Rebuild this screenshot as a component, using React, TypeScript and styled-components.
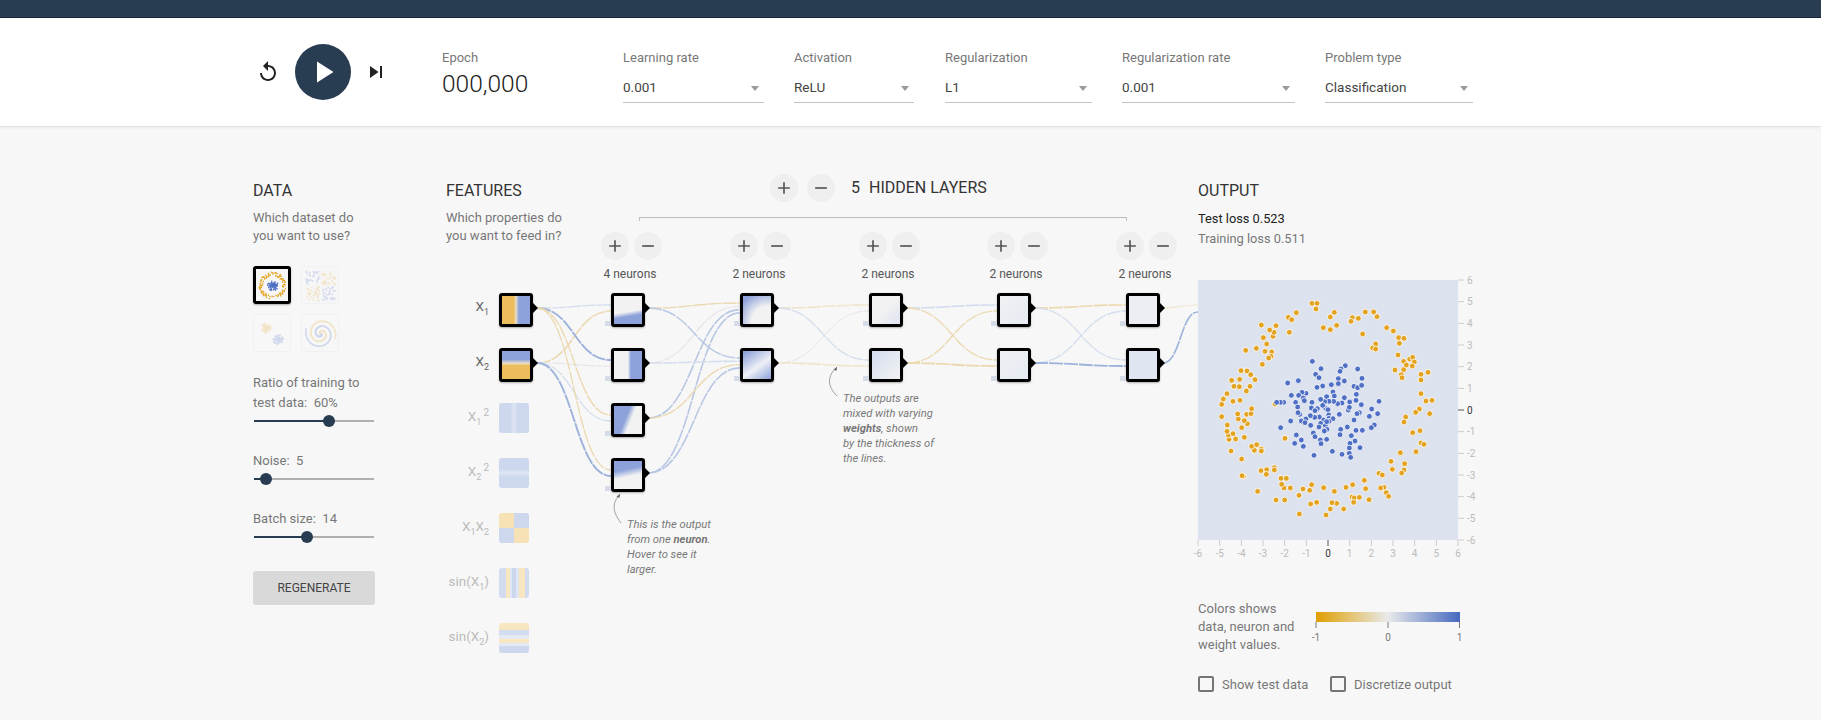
import React from 'react';
import styled, {createGlobalStyle} from 'styled-components';

const NAVY = '#283c52';
const BLUE_DOT = '#4e6fc4';
const ORANGE_DOT = '#e3a21f';
const NODE_BLUE = '#8da2da';
const NODE_ORANGE = '#ecbd5c';
const NODE_BLANK = '#f2f2f2';

const GlobalStyle = createGlobalStyle`
  html, body {
    margin: 0;
    height: 720px;
    overflow: hidden;
    background: #f7f7f7;
    font-family: Roboto, "Liberation Sans", sans-serif;
    color: #777;
  }
`;

const TopBar = styled.div`
  height: 17px;
  background: ${NAVY};
  border-bottom: 1px solid #1c2a3a;
  box-shadow: 0 1px 3px rgba(0, 0, 0, 0.25);
`;

const Header = styled.header`
  height: 109px;
  background: #fff;
  border-bottom: 1px solid #e4e4e4;
  box-shadow: 0 1px 3px rgba(0, 0, 0, 0.06);
  display: flex;
  align-items: flex-start;
  padding-left: 256px;
  box-sizing: border-box;
`;

const Playback = styled.div`
  display: flex;
  align-items: center;
  gap: 17px;
  margin-top: 26px;
  width: 186px;
`;

const PlainIcon = styled.svg`
  width: 24px;
  height: 24px;
  fill: #222;
  flex: none;
`;

const PlayButton = styled.div`
  width: 56px;
  height: 56px;
  border-radius: 50%;
  background: ${NAVY};
  display: flex;
  align-items: center;
  justify-content: center;
  flex: none;
  margin-left: -2px;
  margin-right: -4px;
  svg {
    width: 36px;
    height: 36px;
    fill: #fff;
  }
`;

const Field = styled.div<{$width: number; $gap: number}>`
  width: ${p => p.$width}px;
  margin-right: ${p => p.$gap}px;
  flex: none;
`;

const FieldLabel = styled.div`
  font-size: 13px;
  line-height: 16px;
  margin-top: 32px;
  color: #777;
`;

const EpochValue = styled.div`
  font-size: 24.5px;
  line-height: 30px;
  margin-top: 3px;
  font-weight: 300;
  color: #222;
`;

const SelectBox = styled.div`
  position: relative;
  border-bottom: 1px solid #c4c4c4;
  font-size: 13.5px;
  line-height: 43px;
  color: #444;
  height: 36px;
  &::after {
    content: '';
    position: absolute;
    right: 5px;
    top: 20px;
    border-left: 4.5px solid transparent;
    border-right: 4.5px solid transparent;
    border-top: 5px solid #9a9a9a;
  }
`;

const Main = styled.main`
  display: grid;
  grid-template-columns: 193px 752px 300px;
  padding: 53px 0 0 253px;
`;

const Title = styled.h4`
  margin: 0;
  padding-top: 1px;
  font-size: 16px;
  line-height: 20px;
  font-weight: 400;
  color: #333;
`;

const Blurb = styled.p`
  margin: 8px 0 0;
  font-size: 13px;
  line-height: 18px;
  color: #777;
`;

const DataColumn = styled.section`
  width: 125px;
`;

const ThumbGrid = styled.div`
  display: grid;
  grid-template-columns: 38px 38px;
  grid-auto-rows: 38px;
  gap: 10px;
  margin-top: 21px;
`;

const Thumb = styled.div<{$active?: boolean}>`
  box-sizing: border-box;
  border-radius: 3px;
  overflow: hidden;
  border: ${p => (p.$active ? '3px solid #000' : '1px solid #f1f1f1')};
  box-shadow: ${p => (p.$active ? '0 1px 2px rgba(0,0,0,.3)' : 'none')};
  svg {
    display: block;
    width: 100%;
    height: 100%;
    opacity: ${p => (p.$active ? 1 : 0.22)};
  }
`;

const SliderLabel = styled.div`
  font-size: 13px;
  line-height: 20px;
  color: #777;
  white-space: pre;
`;

const SliderBlock = styled.div<{$top: number}>`
  margin-top: ${p => p.$top}px;
`;

const SliderTrack = styled.div`
  position: relative;
  height: 2px;
  width: 120px;
  margin: 7px 0 0 1px;
  background: #b0b0b0;
`;

const SliderFill = styled.div`
  height: 100%;
  background: ${NAVY};
`;

const SliderThumb = styled.div`
  position: absolute;
  top: -5px;
  width: 12px;
  height: 12px;
  margin-left: -6px;
  border-radius: 50%;
  background: ${NAVY};
`;

const RegenerateButton = styled.button`
  display: block;
  width: 122px;
  height: 34px;
  margin-top: 33px;
  border: 0;
  border-radius: 3px;
  background: #d9d9d9;
  color: #444;
  font: 400 12px Roboto, sans-serif;
`;

const Middle = styled.section`
  position: relative;
  height: 500px;
`;

const TopRow = styled.div`
  display: flex;
  align-items: flex-start;
`;

const Intro = styled.div`
  width: 324px;
  flex: none;
`;

const LayersControl = styled.div`
  display: flex;
  align-items: center;
  gap: 9px;
  margin-top: -6px;
`;

const LayersLabel = styled.div`
  display: flex;
  gap: 9px;
  margin: -2px 0 0 7px;
  font-size: 16px;
  color: #333;
`;

const RoundButton = styled.div`
  width: 28px;
  height: 28px;
  border-radius: 50%;
  background: #efefef;
  display: flex;
  align-items: center;
  justify-content: center;
  flex: none;
  svg {
    width: 20px;
    height: 20px;
    fill: #555;
  }
`;

const Bracket = styled.div`
  position: absolute;
  left: 193px;
  top: 37px;
  width: 488px;
  height: 4px;
  border: 1px solid #bdbdbd;
  border-bottom: 0;
  box-sizing: border-box;
`;

const LinkLayer = styled.svg`
  position: absolute;
  left: 0;
  top: 0;
  overflow: visible;
`;

const LayerHead = styled.div`
  position: absolute;
  top: 52px;
  width: 70px;
  display: flex;
  flex-wrap: wrap;
  justify-content: center;
  gap: 5px;
`;

const NeuronCount = styled.div`
  width: 100%;
  text-align: center;
  font-size: 12px;
  line-height: 14px;
  margin-top: 2px;
  color: #555;
  padding-right: 2px;
  white-space: nowrap;
`;

const Neuron = styled.div`
  position: absolute;
  width: 34px;
  height: 34px;
  box-sizing: border-box;
  border: 3px solid #000;
  border-radius: 3px;
  box-shadow: 0 1px 2px rgba(0, 0, 0, 0.3);
  &::after {
    content: '';
    position: absolute;
    left: 31px;
    top: 7px;
    border-top: 5px solid transparent;
    border-bottom: 5px solid transparent;
    border-left: 5px solid #000;
  }
`;

const BiasSquare = styled.div`
  position: absolute;
  width: 6px;
  height: 5px;
  background: #d5dce8;
`;

const FeatureRow = styled.div`
  position: absolute;
  left: 0;
  width: 87px;
  display: flex;
  align-items: center;
  justify-content: flex-end;
`;

const FeatureName = styled.div<{$on?: boolean}>`
  position: absolute;
  right: 44px;
  top: 5px;
  font-size: 13.5px;
  color: ${p => (p.$on ? '#666' : '#bbb')};
  white-space: nowrap;
  sub, sup {
    font-size: 9px;
    line-height: 0;
  }
  sup {
    font-size: 10px;
    margin-left: 2px;
  }
`;

const ActiveFeature = styled.div`
  width: 34px;
  height: 34px;
  box-sizing: border-box;
  position: relative;
  border: 3px solid #000;
  border-radius: 3px;
  box-shadow: 0 1px 2px rgba(0, 0, 0, 0.3);
  &::after {
    content: '';
    position: absolute;
    left: 31px;
    top: 7px;
    border-top: 5px solid transparent;
    border-bottom: 5px solid transparent;
    border-left: 5px solid #000;
  }
`;

const IdleFeature = styled.div`
  width: 30px;
  height: 30px;
  border-radius: 3px;
  margin-right: 4px;
`;

const Note = styled.div`
  position: absolute;
  font-size: 11.2px;
  line-height: 15px;
  font-style: italic;
  color: #777;
  b {
    font-weight: 700;
  }
`;

const OutputColumn = styled.section``;

const LossLine = styled.div<{$dark?: boolean}>`
  font-size: 12.8px;
  line-height: 20px;
  color: ${p => (p.$dark ? '#222' : '#777')};
`;

const Losses = styled.div`
  margin-top: 8px;
`;

const ChartFrame = styled.svg`
  display: block;
  margin-top: 31px;
  width: 290px;
  height: 285px;
  overflow: visible;
`;

const LegendRow = styled.div`
  display: flex;
  gap: 13px;
  margin-top: 35px;
`;

const LegendText = styled.div`
  width: 105px;
  font-size: 13px;
  line-height: 18px;
  color: #777;
`;

const LegendScale = styled.svg`
  width: 150px;
  height: 41px;
  margin-top: 12px;
  overflow: visible;
`;

const CheckRow = styled.div`
  display: flex;
  margin-top: 22px;
`;

const Check = styled.label<{$width: number}>`
  width: ${p => p.$width}px;
  display: flex;
  align-items: center;
  gap: 8px;
  font-size: 13px;
  color: #777;
`;

const CheckBox = styled.span`
  width: 16px;
  height: 16px;
  box-sizing: border-box;
  border: 2px solid #757575;
  border-radius: 2px;
`;

// dots read from the reference, in a 900x900 crop of the output plot
const ORANGE_POINTS = [
  [396,100],[411,100],[408,117],[349,128],[325,142],[335,149],[463,127],[451,141],[470,166],[430,173],[451,179],[517,143],[513,154],[535,145],[556,126],[581,126],[591,140],[548,192],[587,222],[578,234],[587,237],[620,173],[640,183],[656,203],[672,205],[658,220],[654,255],[689,267],[698,262],[703,276],[671,274],[679,285],[697,288],[671,299],[645,300],[664,314],[666,323],[723,313],[744,307],[723,330],
  [723,371],[738,393],[756,391],[718,417],[707,427],[749,431],[677,441],[672,456],[698,488],[720,482],[723,519],[732,523],[661,548],[708,545],
  [633,574],[674,581],[637,598],[672,600],[665,609],[597,610],[607,615],[553,631],[612,652],[602,654],[619,668],[626,679],[557,656],[518,644],[498,652],[516,681],[523,684],[538,682],[521,697],[567,689],[491,717],[470,700],[456,698],[451,717],[438,735],[463,664],[431,653],[395,644],[389,661],[369,657],[357,676],[410,697],[392,702],[358,732],[331,654],[312,654],[303,625],[319,625],[305,643],[314,690],[288,690],[233,664],[283,593],[283,600],[260,599],[243,602],[259,613],[190,619],[186,617],[185,567],
  [244,537],[244,543],[223,541],[215,529],[230,524],[153,543],[167,507],[147,508],[193,502],[145,495],[141,484],[142,465],[185,473],[159,491],[202,461],[193,452],[175,447],[173,432],[200,433],[213,431],[215,416],[125,440],[125,403],[130,387],[141,371],[159,394],[180,391],[199,363],[162,349],[178,350],[155,331],[179,328],[183,302],[201,303],[212,314],[225,329],[210,349],
  [197,241],[229,235],[247,283],[255,244],[275,246],[273,259],[266,264],[260,222],[250,203],[279,199],[282,187],[269,180],[288,167],[244,165],[328,187],[285,402],[315,505],
];

const BLUE_POINTS = [
  [397,274],[423,296],[407,313],[417,323],[496,287],[483,297],[480,304],[533,297],[546,325],[475,326],[493,333],[475,341],[454,344],[428,348],[411,352],[355,332],[323,339],[522,349],[533,353],[545,346],[459,366],[463,378],[440,380],[529,373],[493,383],[528,391],[597,394],[544,404],[509,396],[486,399],[473,401],[461,394],[447,394],[434,395],[422,388],[396,397],[378,370],[366,367],[356,376],[334,376],[370,384],[373,392],[347,397],[353,411],[311,397],[301,397],[290,397],[394,414],[412,416],[405,422],[437,415],[444,419],[505,420],[508,412],[575,417],[568,439],[593,431],[538,428],[531,431],[522,450],[478,433],[446,435],[447,445],[459,446],[447,454],[430,450],[418,441],[404,442],[391,437],[375,446],[378,447],[364,453],[375,458],[359,433],[354,428],[332,453],[422,460],[417,471],[436,467],[441,478],[433,483],[482,478],[502,471],[528,481],[547,481],[583,465],[574,473],[302,473],[400,489],[405,500],[349,495],[364,510],[344,520],[370,529],[421,510],[423,521],[440,508],[480,494],[514,497],[525,513],[510,520],[508,534],[540,533],[457,544],[486,553],[402,556],[508,550],[512,562],[392,466],[428,406],[440,455],
];

const seeded = (seed: number) => {
  let s = seed;
  return () => {
    s = (s * 16807) % 2147483647;
    return s / 2147483647;
  };
};

type Dot = [number, number, string];

const circleDots = (): Dot[] => {
  const r = seeded(11);
  const out: Dot[] = [];
  for (let i = 0; i < 90; i++) {
    const a = r() * 6.283;
    const d = r() * 5.5;
    out.push([16 + Math.cos(a) * d, 16 + Math.sin(a) * d, BLUE_DOT]);
  }
  for (let i = 0; i < 110; i++) {
    const a = r() * 6.283;
    const d = 10 + r() * 3.5;
    out.push([16 + Math.cos(a) * d, 16 + Math.sin(a) * d, ORANGE_DOT]);
  }
  return out;
};

const xorDots = (): Dot[] => {
  const r = seeded(23);
  const out: Dot[] = [];
  for (let i = 0; i < 190; i++) {
    const x = 3 + r() * 26;
    const y = 3 + r() * 26;
    if (Math.abs(x - 16) < 1 || Math.abs(y - 16) < 1) continue;
    out.push([x, y, (x < 16) === (y < 16) ? BLUE_DOT : ORANGE_DOT]);
  }
  return out;
};

const gaussDots = (): Dot[] => {
  const r = seeded(37);
  const out: Dot[] = [];
  for (let i = 0; i < 160; i++) {
    const a = r() * 6.283;
    const d = r() * 4.5;
    const blue = i % 2 === 0;
    out.push([(blue ? 21 : 10) + Math.cos(a) * d, (blue ? 21 : 11) + Math.sin(a) * d, blue ? BLUE_DOT : ORANGE_DOT]);
  }
  return out;
};

const spiralDots = (): Dot[] => {
  const out: Dot[] = [];
  for (let i = 0; i < 150; i++) {
    const t = (i / 150) * 9.8;
    const d = t * 1.4;
    out.push([16 + Math.cos(t) * d, 16 + Math.sin(t) * d, BLUE_DOT]);
    out.push([16 - Math.cos(t) * d, 16 - Math.sin(t) * d, ORANGE_DOT]);
  }
  return out;
};

const DatasetThumb = ({dots, active}: {dots: Dot[]; active?: boolean}) => (
  <Thumb $active={active}>
    <svg viewBox="0 0 32 32">
      {dots.map(([x, y, c], i) => (
        <rect key={i} x={x} y={y} width="1.3" height="1.3" fill={c} />
      ))}
    </svg>
  </Thumb>
);

const Slider = ({label, pct, top}: {label: string; pct: number; top: number}) => (
  <SliderBlock $top={top}>
    <SliderLabel>{label}</SliderLabel>
    <SliderTrack>
      <SliderFill style={{width: `${pct}%`}} />
      <SliderThumb style={{left: `${pct}%`}} />
    </SliderTrack>
  </SliderBlock>
);

const Plus = () => (
  <svg viewBox="0 0 24 24"><path d="M19 13h-6v6h-2v-6H5v-2h6V5h2v6h6v2z" /></svg>
);
const Minus = () => (
  <svg viewBox="0 0 24 24"><path d="M19 13H5v-2h14v2z" /></svg>
);

// diagram coordinates are relative to the middle column (446, 180)
const LAYER_X = [165, 294, 423, 551, 680];
const ROW_Y = [113, 168, 223, 278];
const FEATURE_Y = [113, 168, 223, 278, 333, 388, 443];

const layers: string[][] = [
  [
    `linear-gradient(170deg, ${NODE_BLANK} 55%, ${NODE_BLUE} 70%)`,
    `linear-gradient(90deg, ${NODE_BLANK} 50%, ${NODE_BLUE} 60%)`,
    `linear-gradient(112deg, ${NODE_BLUE} 42%, ${NODE_BLANK} 58%)`,
    `linear-gradient(168deg, ${NODE_BLUE} 32%, ${NODE_BLANK} 55%)`,
  ],
  [
    `radial-gradient(circle at 90% 95%, ${NODE_BLANK} 45%, ${NODE_BLUE} 88%)`,
    `linear-gradient(145deg, ${NODE_BLUE} 5%, #eef0f6 55%, ${NODE_BLUE} 100%)`,
  ],
  [
    'linear-gradient(135deg, #f2f2f2 45%, #dde3f0)',
    'linear-gradient(135deg, #d3dcef, #f2f2f2)',
  ],
  [
    'linear-gradient(135deg, #f0f1f3, #e6eaf2)',
    'linear-gradient(135deg, #eef0f3, #e6eaf2)',
  ],
  ['#eceef3', '#e0e6f1'],
];

const PALE_BLUE = '#d5deee';
const SOFT_BLUE = '#b8c7e4';
const MID_BLUE = '#9db3dc';
const PALE_ORANGE = '#f0e5cc';
const SOFT_ORANGE = '#ebd9b0';
const GREY = '#e6e6e6';

// [from row, to row, colour, width]
type Link = [number, number, string, number];
const linkSets: Link[][] = [
  [
    [0, 0, PALE_BLUE, 1.3], [1, 0, SOFT_ORANGE, 1.6],
    [0, 1, MID_BLUE, 1.9], [1, 1, GREY, 1.2],
    [0, 2, SOFT_ORANGE, 1.4], [1, 2, PALE_BLUE, 1.3],
    [0, 3, SOFT_ORANGE, 1.3], [1, 3, MID_BLUE, 1.9],
  ],
  [
    [0, 0, SOFT_ORANGE, 1.3], [1, 0, GREY, 1.2], [2, 0, SOFT_BLUE, 1.6], [3, 0, SOFT_BLUE, 1.6],
    [0, 1, SOFT_BLUE, 1.4], [1, 1, PALE_BLUE, 1.6], [2, 1, SOFT_ORANGE, 1.4], [3, 1, SOFT_BLUE, 1.6],
  ],
  [
    [0, 0, PALE_ORANGE, 1.6], [1, 0, GREY, 1],
    [0, 1, PALE_BLUE, 1.3], [1, 1, PALE_ORANGE, 1.7],
  ],
  [
    [0, 0, PALE_BLUE, 1.7], [1, 0, SOFT_ORANGE, 1.3],
    [0, 1, SOFT_ORANGE, 1.3], [1, 1, SOFT_ORANGE, 1.9],
  ],
  [
    [0, 0, SOFT_ORANGE, 1.7], [1, 0, PALE_BLUE, 1.4],
    [0, 1, PALE_BLUE, 1.3], [1, 1, MID_BLUE, 1.8],
  ],
];

const curve = (x1: number, y1: number, x2: number, y2: number) => {
  const mx = (x1 + x2) / 2;
  return `M${x1} ${y1}C${mx} ${y1} ${mx} ${y2} ${x2} ${y2}`;
};

const sourceX = [91, ...LAYER_X.slice(0, 4).map(x => x + 37)];

const features = [
  {name: <>X<sub>1</sub></>, on: true, bg: `linear-gradient(90deg, ${NODE_ORANGE} 42%, #e8dfc8 50%, ${NODE_BLUE} 60%)`},
  {name: <>X<sub>2</sub></>, on: true, bg: `linear-gradient(180deg, ${NODE_BLUE} 30%, #e8dfc8 44%, ${NODE_ORANGE} 52%)`},
  {name: <>X<sub>1</sub><sup>2</sup></>, bg: 'linear-gradient(90deg, #cdd8ee 38%, #dfe6f3 50%, #cdd8ee 62%)'},
  {name: <>X<sub>2</sub><sup>2</sup></>, bg: 'linear-gradient(180deg, #cdd8ee 36%, #dfe6f3 50%, #cdd8ee 64%)'},
  {name: <>X<sub>1</sub>X<sub>2</sub></>, bg: 'conic-gradient(#cdd8ee 0 25%, #f6e2b5 25% 50%, #cdd8ee 50% 75%, #f6e2b5 75%)'},
  {name: <>sin(X<sub>1</sub>)</>, bg: 'linear-gradient(90deg, #d3dcef 0 25%, #f7e6bf 25% 38%, #dfe6f3 38% 44%, #cdd8ee 44% 58%, #dfe6f3 58% 68%, #f7e6bf 68% 88%, #d3dcef 88%)'},
  {name: <>sin(X<sub>2</sub>)</>, bg: 'linear-gradient(180deg, #f7e6bf 0 22%, #d3dcef 22% 40%, #e4e9f3 40% 52%, #f7e6bf 52% 66%, #e4e9f3 66% 78%, #cdd8ee 78%)'},
];

const selects = [
  {label: 'Learning rate', value: '0.001', width: 141, gap: 30},
  {label: 'Activation', value: 'ReLU', width: 120, gap: 31},
  {label: 'Regularization', value: 'L1', width: 147, gap: 30},
  {label: 'Regularization rate', value: '0.001', width: 173, gap: 30},
  {label: 'Problem type', value: 'Classification', width: 148, gap: 0},
];

const TICKS = [-6, -5, -4, -3, -2, -1, 0, 1, 2, 3, 4, 5, 6];

const Network = () => (
  <Middle>
    <TopRow>
      <Intro>
        <Title>FEATURES</Title>
        <Blurb>Which properties do<br />you want to feed in?</Blurb>
      </Intro>
      <LayersControl>
        <RoundButton><Plus /></RoundButton>
        <RoundButton><Minus /></RoundButton>
        <LayersLabel><span>5</span><span>HIDDEN LAYERS</span></LayersLabel>
      </LayersControl>
    </TopRow>
    <Bracket />

    <LinkLayer width="752" height="500">
      {linkSets.map((set, li) => {
        const targetX = LAYER_X[li];
        return set.map(([from, to, color, width], i) => {
          const sameTarget = set.filter(l => l[1] === to);
          const idx = sameTarget.findIndex(l => l[0] === from);
          const spread = sameTarget.length > 2 ? 3.3 : 6;
          const base = sameTarget.length > 2 ? 10 : 12;
          return (
            <path
              key={`${li}-${i}`}
              d={curve(sourceX[li], ROW_Y[from] + 15, targetX, ROW_Y[to] + base + idx * spread)}
              fill="none"
              stroke={color}
              strokeWidth={width}
              strokeDasharray="14 1"
            />
          );
        });
      })}
      <path d={curve(717, 128, 752, 125)} fill="none" stroke={PALE_ORANGE} strokeWidth="1.2" />
      <path d={curve(717, 183, 752, 132)} fill="none" stroke={MID_BLUE} strokeWidth="1.7" strokeDasharray="14 1" />
      <path d="M175 343C165 330 167 322 174 314" fill="none" stroke="#888" strokeWidth="0.8" />
      <path d="M174 314l-3.5 2.5 3 1.5z" fill="#666" />
      <path d="M391 216C381 206 381 196 391 187" fill="none" stroke="#888" strokeWidth="0.8" />
      <path d="M391 187l-3.5 2.5 3 1.5z" fill="#666" />
    </LinkLayer>

    {features.map((f, i) => (
      <FeatureRow key={i} style={{top: FEATURE_Y[i]}}>
        <FeatureName $on={f.on}>{f.name}</FeatureName>
        {f.on ? <ActiveFeature style={{background: f.bg}} /> : <IdleFeature style={{background: f.bg}} />}
      </FeatureRow>
    ))}

    {layers.map((rows, li) => (
      <React.Fragment key={li}>
        <LayerHead style={{left: LAYER_X[li] - 15}}>
          <RoundButton><Plus /></RoundButton>
          <RoundButton><Minus /></RoundButton>
          <NeuronCount>{rows.length} neurons</NeuronCount>
        </LayerHead>
        {rows.map((bg, ri) => (
          <React.Fragment key={ri}>
            <Neuron style={{left: LAYER_X[li], top: ROW_Y[ri], background: bg}} />
            <BiasSquare style={{left: LAYER_X[li] - 6, top: ROW_Y[ri] + 28}} />
          </React.Fragment>
        ))}
      </React.Fragment>
    ))}

    <Note style={{left: 181, top: 337, width: 100}}>
      This is the output<br />from one <b>neuron</b>.<br />Hover to see it<br />larger.
    </Note>
    <Note style={{left: 397, top: 211, width: 100}}>
      The outputs are<br />mixed with varying<br /><b>weights</b>, shown<br />by the thickness of<br />the lines.
    </Note>
  </Middle>
);

const Plot = () => {
  const step = 260 / 12;
  return (
    <ChartFrame viewBox="0 0 290 285">
      <rect width="260" height="260" fill="#dde3ee" />
      {ORANGE_POINTS.map(([x, y], i) => (
        <circle key={`o${i}`} cx={x / 3 - 18} cy={y / 3 - 10} r="2.9" fill={ORANGE_DOT} stroke="#fff" strokeWidth="0.8" />
      ))}
      {BLUE_POINTS.map(([x, y], i) => (
        <circle key={`b${i}`} cx={x / 3 - 18} cy={y / 3 - 10} r="2.9" fill={BLUE_DOT} stroke="#fff" strokeWidth="0.8" />
      ))}
      {TICKS.map((t, i) => {
        const pos = i * step;
        const zero = t === 0;
        const color = zero ? '#333' : '#bbb';
        return (
          <React.Fragment key={t}>
            <line x1={pos} x2={pos} y1="260" y2="266" stroke={zero ? '#555' : '#ccc'} />
            <line x1="260" x2="266" y1={260 - pos} y2={260 - pos} stroke={zero ? '#555' : '#ccc'} />
            <text x={pos} y="277" fontSize="10" fill={color} textAnchor="middle" fontFamily="Roboto, sans-serif">{t}</text>
            <text x="269" y={263.5 - pos} fontSize="10" fill={color} fontFamily="Roboto, sans-serif">{t}</text>
          </React.Fragment>
        );
      })}
    </ChartFrame>
  );
};

const Output = () => (
  <OutputColumn>
    <Title>OUTPUT</Title>
    <Losses>
      <LossLine $dark>Test loss 0.523</LossLine>
      <LossLine>Training loss 0.511</LossLine>
    </Losses>
    <Plot />
    <LegendRow>
      <LegendText>Colors shows data, neuron and weight values.</LegendText>
      <LegendScale viewBox="0 0 150 41">
        <defs>
          <linearGradient id="legendRamp">
            <stop offset="0" stopColor="#e09f00" />
            <stop offset="0.5" stopColor="#e8eaeb" />
            <stop offset="1" stopColor="#4668c0" />
          </linearGradient>
        </defs>
        <rect width="144" height="10" fill="url(#legendRamp)" />
        {[[0, '-1'], [72, '0'], [143.5, '1']].map(([x, t]) => (
          <React.Fragment key={t as string}>
            <line x1={x as number} x2={x as number} y1="10" y2="16" stroke="#777" />
            <text x={x as number} y="29" fontSize="10" fill="#777" textAnchor="middle" fontFamily="Roboto, sans-serif">{t}</text>
          </React.Fragment>
        ))}
      </LegendScale>
    </LegendRow>
    <CheckRow>
      <Check $width={132}><CheckBox />Show test data</Check>
      <Check $width={140}><CheckBox />Discretize output</Check>
    </CheckRow>
  </OutputColumn>
);

const Data = () => (
  <DataColumn>
    <Title>DATA</Title>
    <Blurb>Which dataset do<br />you want to use?</Blurb>
    <ThumbGrid>
      <DatasetThumb dots={circleDots()} active />
      <DatasetThumb dots={xorDots()} />
      <DatasetThumb dots={gaussDots()} />
      <DatasetThumb dots={spiralDots()} />
    </ThumbGrid>
    <Slider label={'Ratio of training to\ntest data:  60%'} pct={62.5} top={21} />
    <Slider label="Noise:  5" pct={10} top={29} />
    <Slider label="Batch size:  14" pct={44} top={29} />
    <RegenerateButton>REGENERATE</RegenerateButton>
  </DataColumn>
);

const App = () => (
  <>
    <GlobalStyle />
    <TopBar />
    <Header>
      <Playback>
        <PlainIcon viewBox="0 0 24 24">
          <path d="M12 5V1L7 6l5 5V7c3.31 0 6 2.69 6 6s-2.69 6-6 6-6-2.69-6-6H4c0 4.42 3.58 8 8 8s8-3.58 8-8-3.58-8-8-8z" />
        </PlainIcon>
        <PlayButton>
          <svg viewBox="0 0 24 24"><path d="M8 5v14l11-7z" /></svg>
        </PlayButton>
        <PlainIcon viewBox="0 0 24 24">
          <path d="M6 18l8.5-6L6 6v12zM16 6v12h2V6h-2z" />
        </PlainIcon>
      </Playback>
      <Field $width={151} $gap={30}>
        <FieldLabel>Epoch</FieldLabel>
        <EpochValue>000,000</EpochValue>
      </Field>
      {selects.map(s => (
        <Field key={s.label} $width={s.width} $gap={s.gap}>
          <FieldLabel>{s.label}</FieldLabel>
          <SelectBox>{s.value}</SelectBox>
        </Field>
      ))}
    </Header>
    <Main>
      <Data />
      <Network />
      <Output />
    </Main>
  </>
);

export default App;
